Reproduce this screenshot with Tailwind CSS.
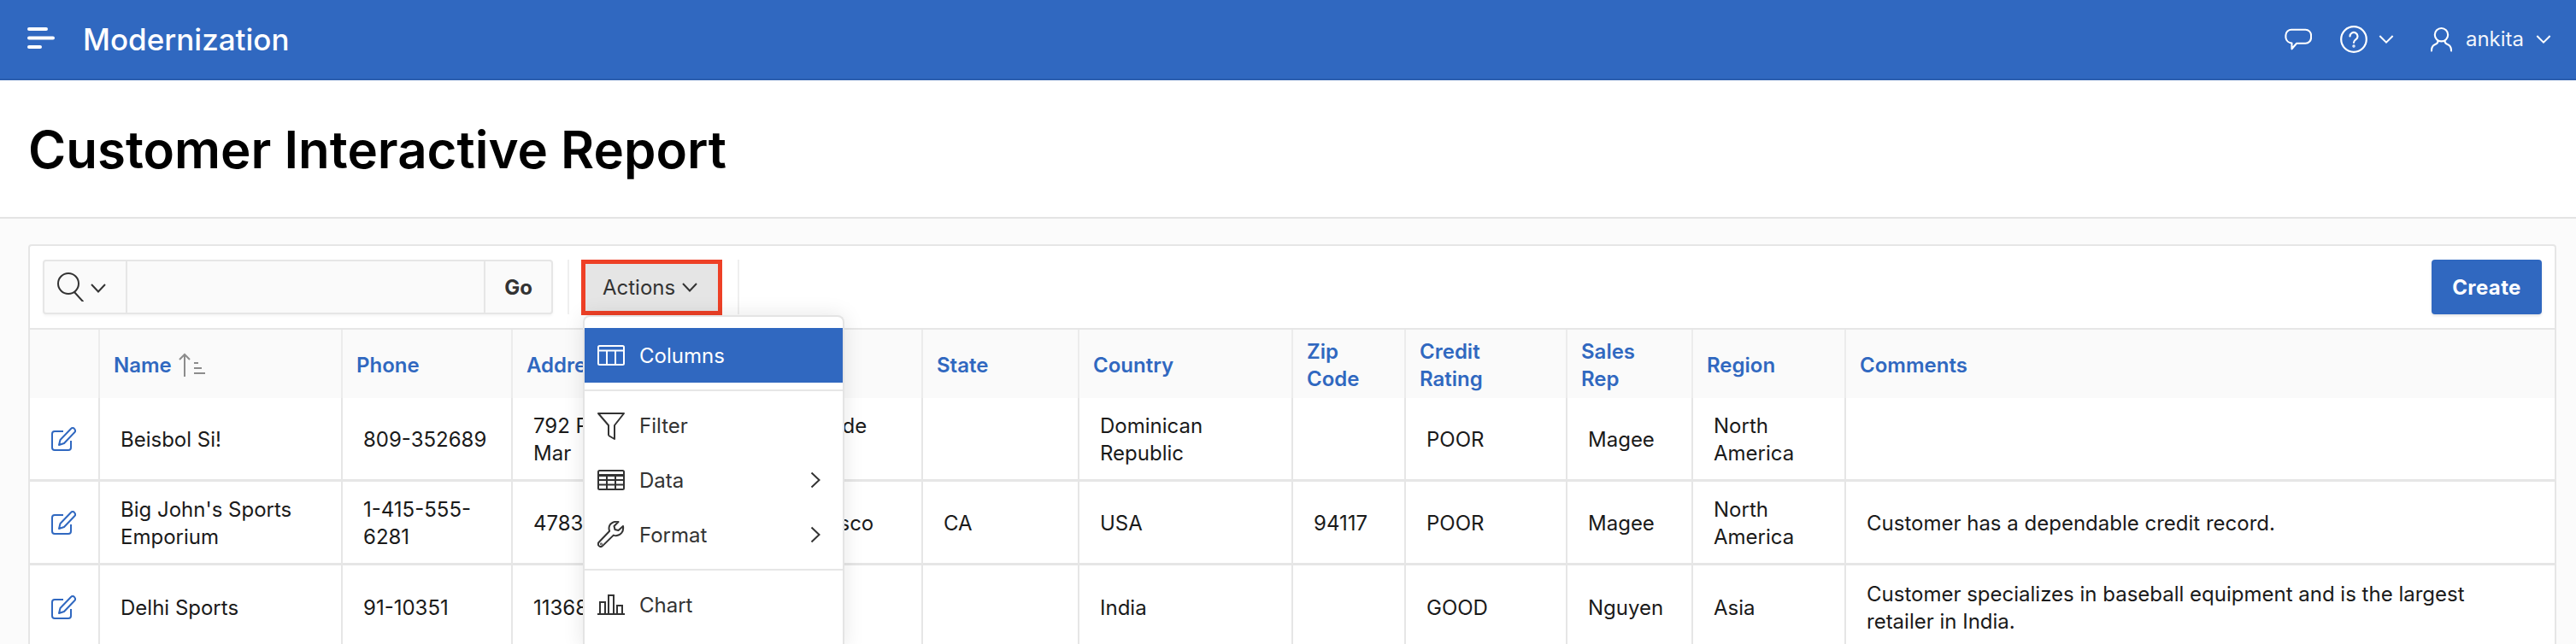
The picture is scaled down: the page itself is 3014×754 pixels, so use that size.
<!doctype html>
<html>
<head>
<meta charset="utf-8">
<script src="https://cdn.jsdelivr.net/npm/@tailwindcss/browser@4"></script>
</head>
<body class="m-0 bg-[#fbfbfb] font-['Inter',sans-serif] text-[24px] leading-[32px] text-[#1a1a1a]">
<div class="relative h-[754px] w-[3014px] overflow-hidden">

<header class="flex h-[94px] items-center border-b-2 border-[#2b5eae] bg-[#3068c0] text-white shadow-[0_4px_12px_rgba(0,0,0,0.05)]">
  <svg class="ml-[32px] mt-[-2px] h-[28px] w-[32px]" viewBox="0 0 32 28" fill="none" stroke="#fff" stroke-width="4" stroke-linecap="round"><path d="M2 3h20M2 13.500h28M2 24h13"/></svg>
  <span class="ml-[33px] text-[35px] font-medium leading-[44px]">Modernization</span>
  <div class="ml-auto flex items-center">
    <svg class="h-[28px] w-[32px]" viewBox="0 0 34 28" fill="none" stroke="#fff" stroke-width="2.200" stroke-linejoin="round"><path d="M9 2h17a7 7 0 0 1 7 7v3a7 7 0 0 1-7 7H15l-6 7v-7.200A8 8 0 0 1 1.500 12V9A7 7 0 0 1 9 2z"/></svg>
    <svg class="ml-[33px] h-[32px] w-[32px]" viewBox="0 0 32 32" fill="none" stroke="#fff" stroke-width="2.200" stroke-linecap="round"><circle cx="16" cy="16" r="14.800"/><path d="M11.500 12.500a4.500 4.500 0 1 1 7 3.700c-1.700 1.100-2.500 1.900-2.500 3.600"/><circle cx="16" cy="24" r="0.600"/></svg>
    <svg class="ml-[13px] h-[12px] w-[18px]" viewBox="0 0 20 12" fill="none" stroke="#fff" stroke-width="2.200"><path d="M1.500 1.500 10 10l8.500-8.500"/></svg>
    <svg class="ml-[43px] h-[30px] w-[25px]" viewBox="0 0 26 30" fill="none" stroke="#fff" stroke-width="2.200" stroke-linecap="round"><circle cx="13" cy="9.500" r="8"/><path d="M9 17c-.3 3-2 3.800-4 4.500C2.500 22.500 1 24.500 1 29M17 17c.3 3 2 3.800 4 4.500 2.500 1 4 3 4 7.500"/></svg>
    <span class="ml-[16px] text-[24px] text-white/95">ankita</span>
    <svg class="ml-[14px] mr-[29px] h-[12px] w-[18px]" viewBox="0 0 20 12" fill="none" stroke="#fff" stroke-width="2.200"><path d="M1.500 1.500 10 10l8.500-8.500"/></svg>
  </div>
</header>

<div class="flex h-[162px] items-center border-b-2 border-[#e4e4e4] bg-white pl-[33px]">
  <h1 class="mt-[2px] text-[60px] font-semibold leading-[72px] text-black">Customer Interactive Report</h1>
</div>

<main class="ml-[33px] mt-[30px] w-[2958px] rounded-t-[4px] border-2 border-[#e6e6e6] bg-white">
  <div class="flex h-[98px] items-center border-b-2 border-[#e6e6e6] px-[15px]">
    <div class="flex h-[64px] w-[597px] items-stretch rounded-[4px] border-2 border-[#e6e6e6] bg-[#fafafa] shadow-[0_2px_3px_rgba(0,0,0,0.04)]">
      <div class="flex w-[97px] items-center border-r-2 border-[#e6e6e6] pl-[15px]">
        <svg class="h-[34px] w-[34px]" viewBox="0 0 34 34" fill="none" stroke="#333" stroke-width="2"><circle cx="13" cy="13" r="12"/><path d="M20 23l10 11" stroke-linecap="round"/></svg>
        <svg class="ml-[5px] mt-[2px] h-[11px] w-[18px]" viewBox="0 0 18 11" fill="none" stroke="#333" stroke-width="2"><path d="M1 1l8 8.500L17 1"/></svg>
      </div>
      <div class="flex-1"></div>
      <div class="flex w-[79px] items-center justify-center border-l-2 border-[#e6e6e6] pt-[2px] font-bold text-[#333]">Go</div>
    </div>
    <div class="ml-[17px] h-[64px] w-[2px] bg-[#efefef]"></div>
    <div class="ml-[14px] flex h-[65px] w-[165px] items-center border-[5px] border-[#ee4026] bg-[#e5e5e5] pl-[20px] text-[#333]">
      <span class="pt-[2px]">Actions</span>
      <svg class="ml-[8px] h-[11px] w-[18px]" viewBox="0 0 18 11" fill="none" stroke="#333" stroke-width="2"><path d="M1 1l8 8.500L17 1"/></svg>
    </div>
    <div class="ml-[18px] h-[64px] w-[2px] bg-[#efefef]"></div>
    <div class="ml-auto flex h-[64px] w-[129px] items-center justify-center rounded-[4px] bg-[#3068c0] pt-[2px] font-bold tracking-[0.4px] text-white shadow-[0_2px_3px_rgba(0,0,0,0.1)]">Create</div>
  </div>

  <table class="w-[2954px] table-fixed border-separate border-spacing-0 text-left">
    <colgroup>
      <col class="w-[80px]"><col class="w-[284px]"><col class="w-[199px]"><col class="w-[238px]"><col class="w-[242px]"><col class="w-[183px]"><col class="w-[250px]"><col class="w-[132px]"><col class="w-[189px]"><col class="w-[147px]"><col class="w-[179px]"><col>
    </colgroup>
    <thead class="bg-[#fafafa] text-[#3068c0]">
      <tr class="h-[80px]">
        <th></th>
        <th class="border-l-2 border-[#ececec] px-[16px] pt-[3px] font-semibold">
          <span class="flex items-center">Name
            <svg class="ml-[8px] mt-[-2px] h-[28px] w-[32px]" viewBox="0 0 32 28" fill="none" stroke="#8c8c8c" stroke-width="2"><path d="M7 28V2M1 8l6-6 6 6"/><path d="M18 12h5M18 18h9M18 24h13" stroke-width="2"/></svg>
          </span>
        </th>
        <th class="border-l-2 border-[#ececec] px-[16px] pt-[3px] font-semibold">Phone</th>
        <th class="border-l-2 border-[#ececec] px-[16px] pt-[3px] font-semibold">Address</th>
        <th class="border-l-2 border-[#ececec] px-[16px] pt-[3px] font-semibold">City</th>
        <th class="border-l-2 border-[#ececec] px-[16px] pt-[3px] font-semibold">State</th>
        <th class="border-l-2 border-[#ececec] px-[16px] pt-[3px] font-semibold">Country</th>
        <th class="border-l-2 border-[#ececec] px-[16px] pt-[3px] font-semibold">Zip<br>Code</th>
        <th class="border-l-2 border-[#ececec] px-[16px] pt-[3px] font-semibold">Credit<br>Rating</th>
        <th class="border-l-2 border-[#ececec] px-[16px] pt-[3px] font-semibold">Sales<br>Rep</th>
        <th class="border-l-2 border-[#ececec] px-[16px] pt-[3px] font-semibold">Region</th>
        <th class="border-l-2 border-[#ececec] px-[16px] pt-[3px] font-semibold">Comments</th>
      </tr>
    </thead>
    <tbody>
      <tr class="h-[98px]">
        <td class="border-b-[3px] border-[#e6e6e6] pl-[25px]"><svg class="h-[28px] w-[29px]" viewBox="0 0 29 28" fill="none" stroke="#3068c0" stroke-width="2" stroke-linejoin="round"><path d="M14 5H4a3 3 0 0 0-3 3v16a3 3 0 0 0 3 3h16a3 3 0 0 0 3-3v-8"/><path d="M9 21l1.500-6L23 2a2.500 2.500 0 0 1 4 0l.5.800a2.500 2.500 0 0 1-.3 3.400L15 19z"/></svg></td>
        <td class="border-b-[3px] border-l-2 border-[#e6e6e6] px-[24px] pt-[2px]">Beisbol Si!</td>
        <td class="border-b-[3px] border-l-2 border-[#e6e6e6] px-[24px] pt-[2px]">809-352689</td>
        <td class="border-b-[3px] border-l-2 border-[#e6e6e6] px-[24px] pt-[2px]">792 Playa Del Mar</td>
        <td class="border-b-[3px] border-l-2 border-[#e6e6e6] px-[24px] pt-[2px]">San Pedro de Macoris</td>
        <td class="border-b-[3px] border-l-2 border-[#e6e6e6] px-[24px] pt-[2px]"></td>
        <td class="border-b-[3px] border-l-2 border-[#e6e6e6] px-[24px] pt-[2px]">Dominican Republic</td>
        <td class="border-b-[3px] border-l-2 border-[#e6e6e6] px-[24px] pt-[2px]"></td>
        <td class="border-b-[3px] border-l-2 border-[#e6e6e6] px-[24px] pt-[2px]">POOR</td>
        <td class="border-b-[3px] border-l-2 border-[#e6e6e6] px-[24px] pt-[2px]">Magee</td>
        <td class="border-b-[3px] border-l-2 border-[#e6e6e6] px-[24px] pt-[2px]">North America</td>
        <td class="border-b-[3px] border-l-2 border-[#e6e6e6] px-[24px] pt-[2px]"></td>
      </tr>
      <tr class="h-[98px]">
        <td class="border-b-[3px] border-[#e6e6e6] pl-[25px]"><svg class="h-[28px] w-[29px]" viewBox="0 0 29 28" fill="none" stroke="#3068c0" stroke-width="2" stroke-linejoin="round"><path d="M14 5H4a3 3 0 0 0-3 3v16a3 3 0 0 0 3 3h16a3 3 0 0 0 3-3v-8"/><path d="M9 21l1.500-6L23 2a2.500 2.500 0 0 1 4 0l.5.800a2.500 2.500 0 0 1-.3 3.400L15 19z"/></svg></td>
        <td class="border-b-[3px] border-l-2 border-[#e6e6e6] px-[24px] pt-[2px]">Big John's Sports Emporium</td>
        <td class="border-b-[3px] border-l-2 border-[#e6e6e6] px-[24px] pt-[2px]">1-415-555-6281</td>
        <td class="border-b-[3px] border-l-2 border-[#e6e6e6] px-[24px] pt-[2px]">4783 18th Street</td>
        <td class="border-b-[3px] border-l-2 border-[#e6e6e6] px-[24px] pt-[2px]">San Francisco</td>
        <td class="border-b-[3px] border-l-2 border-[#e6e6e6] px-[24px] pt-[2px]">CA</td>
        <td class="border-b-[3px] border-l-2 border-[#e6e6e6] px-[24px] pt-[2px]">USA</td>
        <td class="border-b-[3px] border-l-2 border-[#e6e6e6] px-[24px] pt-[2px]">94117</td>
        <td class="border-b-[3px] border-l-2 border-[#e6e6e6] px-[24px] pt-[2px]">POOR</td>
        <td class="border-b-[3px] border-l-2 border-[#e6e6e6] px-[24px] pt-[2px]">Magee</td>
        <td class="border-b-[3px] border-l-2 border-[#e6e6e6] px-[24px] pt-[2px]">North America</td>
        <td class="border-b-[3px] border-l-2 border-[#e6e6e6] px-[24px] pt-[2px]">Customer has a dependable credit record.</td>
      </tr>
      <tr class="h-[98px]">
        <td class="pl-[25px]"><svg class="h-[28px] w-[29px]" viewBox="0 0 29 28" fill="none" stroke="#3068c0" stroke-width="2" stroke-linejoin="round"><path d="M14 5H4a3 3 0 0 0-3 3v16a3 3 0 0 0 3 3h16a3 3 0 0 0 3-3v-8"/><path d="M9 21l1.500-6L23 2a2.500 2.500 0 0 1 4 0l.5.800a2.500 2.500 0 0 1-.3 3.400L15 19z"/></svg></td>
        <td class="border-l-2 border-[#e6e6e6] px-[24px] pt-[2px]">Delhi Sports</td>
        <td class="border-l-2 border-[#e6e6e6] px-[24px] pt-[2px]">91-10351</td>
        <td class="border-l-2 border-[#e6e6e6] px-[24px] pt-[2px]">11368 Chanakya</td>
        <td class="border-l-2 border-[#e6e6e6] px-[24px] pt-[2px]">New Delhi</td>
        <td class="border-l-2 border-[#e6e6e6] px-[24px] pt-[2px]"></td>
        <td class="border-l-2 border-[#e6e6e6] px-[24px] pt-[2px]">India</td>
        <td class="border-l-2 border-[#e6e6e6] px-[24px] pt-[2px]"></td>
        <td class="border-l-2 border-[#e6e6e6] px-[24px] pt-[2px]">GOOD</td>
        <td class="border-l-2 border-[#e6e6e6] px-[24px] pt-[2px]">Nguyen</td>
        <td class="border-l-2 border-[#e6e6e6] px-[24px] pt-[2px]">Asia</td>
        <td class="border-l-2 border-[#e6e6e6] px-[24px] pt-[2px]">Customer specializes in baseball equipment and is the largest retailer in India.</td>
      </tr>
    </tbody>
  </table>
</main>

<nav class="absolute left-[682px] top-[369px] w-[306px] rounded-t-[8px] border-2 border-b-0 border-[#e4e4e4] bg-white pt-[13px] text-[#333] shadow-[0_0_24px_rgba(0,0,0,0.10)]">
  <div class="flex h-[64px] items-center bg-[#3068c0] pl-[15px] text-white">
    <svg class="h-[24px] w-[32px]" viewBox="0 0 32 24" fill="none" stroke="#fff" stroke-width="2"><rect x="1" y="1" width="30" height="22" rx="1.500"/><path d="M1 6.500h30M11 6.500V23M21 6.500V23"/></svg>
    <span class="ml-[17px] pt-[2px]">Columns</span>
  </div>
  <div class="mt-[8px] h-[2px] bg-[#e6e6e6]"></div>
  <div class="mt-[8px] flex h-[64px] items-center pl-[15px]">
    <svg class="mt-[2px] h-[32px] w-[32px]" viewBox="0 0 32 32" fill="none" stroke="#333" stroke-width="2" stroke-linejoin="round"><path d="M1 1h30L20 15v16l-6-3.500a2 2 0 0 1-1-1.500V15z"/></svg>
    <span class="ml-[17px] pt-[2px]">Filter</span>
  </div>
  <div class="flex h-[64px] items-center pl-[15px]">
    <svg class="h-[24px] w-[32px]" viewBox="0 0 32 24" fill="none" stroke="#333" stroke-width="2"><rect x="1" y="1" width="30" height="22" rx="1.500"/><path d="M1 6.500h30" stroke-width="3"/><path d="M1 12h30M1 17.500h30M11 6.500V23M21 6.500V23"/></svg>
    <span class="ml-[17px] pt-[2px]">Data</span>
    <svg class="ml-auto mr-[26px] h-[20px] w-[12px]" viewBox="0 0 12 20" fill="none" stroke="#333" stroke-width="2"><path d="M1.500 1.500 10.500 10l-9 8.500"/></svg>
  </div>
  <div class="flex h-[64px] items-center pl-[15px]">
    <svg class="h-[32px] w-[32px]" viewBox="0 0 32 32" fill="none" stroke="#333" stroke-width="2" stroke-linejoin="round"><path d="M30 6l-5.500 5-4-1-1-4 5-5C19 0 13.500 3 13.500 8.500c0 1.500.3 2.500.7 3.200L1.800 24.800c-1.200 1.300-1.200 3 0 4.300 1.200 1.200 3 1.200 4.200 0l12.800-12.500c.9.400 1.900.6 3 .6C27.500 17 31 12 30 6z"/><circle cx="4.500" cy="27" r="0.400"/></svg>
    <span class="ml-[17px] pt-[2px]">Format</span>
    <svg class="ml-auto mr-[26px] h-[20px] w-[12px]" viewBox="0 0 12 20" fill="none" stroke="#333" stroke-width="2"><path d="M1.500 1.500 10.500 10l-9 8.500"/></svg>
  </div>
  <div class="mt-[8px] h-[2px] bg-[#e6e6e6]"></div>
  <div class="mt-[8px] flex h-[64px] items-center pl-[15px]">
    <svg class="h-[24px] w-[32px]" viewBox="0 0 32 24" fill="none" stroke="#333" stroke-width="2"><path d="M0 23h32M3 23V9h6v14M13 23V1h6v22M23 23V13h6v10"/></svg>
    <span class="ml-[17px] pt-[2px]">Chart</span>
  </div>
  <div class="h-[20px]"></div>
</nav>

</div>
</body>
</html>
